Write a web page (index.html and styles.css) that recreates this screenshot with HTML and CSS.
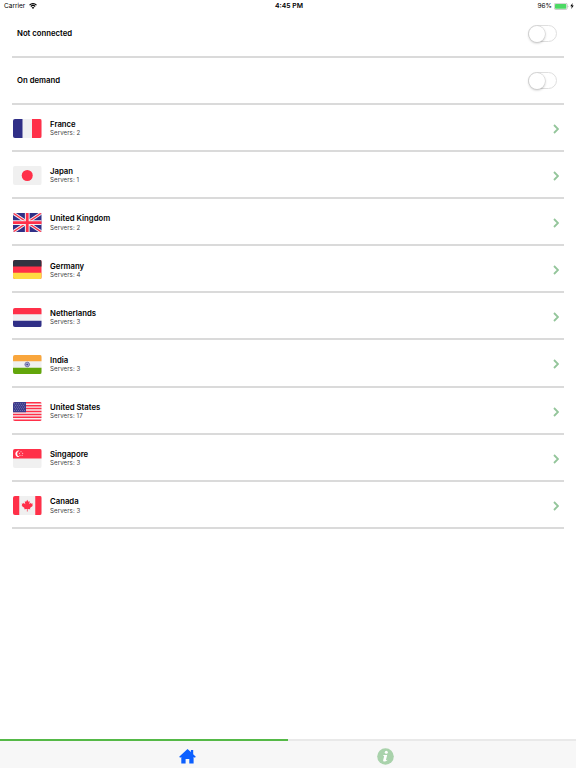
FILE: index.html
```html
<!DOCTYPE html>
<html lang="en">
<head>
<meta charset="utf-8">
<title>Servers</title>
<link rel="stylesheet" href="styles.css">
</head>
<body>
<header class="status">
  <div class="status-left"><span>Carrier</span>
    <svg class="wifi" viewBox="0 0 16 12"><path d="M1 4.2a10 10 0 0 1 14 0M3.6 7a6.3 6.3 0 0 1 8.8 0" fill="none" stroke="#000" stroke-width="2.2"/><path d="M8 12 5.3 9.2a3.8 3.8 0 0 1 5.4 0z"/></svg>
  </div>
  <div class="time">4:45 PM</div>
  <div class="status-right"><span>96%</span>
    <svg class="battery" viewBox="0 0 15 7"><rect x=".3" y=".3" width="12.9" height="6.2" rx="1.4" fill="#fff" stroke="#999" stroke-width=".5"/><rect x="1" y="1" width="11.3" height="4.8" rx=".7" fill="#4cd964"/><path d="M13.8 2.4q1 1 0 2z" fill="#777"/></svg>
    <svg class="bolt" viewBox="0 0 4 7"><path d="M2.7 0 0 3.9h1.7L1.2 7 4 2.9H2.3z"/></svg>
  </div>
</header>
<main class="list">
  <div class="row setting"><span class="name">Not connected</span><span class="switch"><span class="knob"></span></span></div>
  <div class="row setting"><span class="name">On demand</span><span class="switch"><span class="knob"></span></span></div>

  <div class="row">
    <svg class="flag" viewBox="0 0 57 38"><path fill="#f0f0f2" d="M0 0h57v38H0z"/><path fill="#302f87" d="M0 0h19v38H0z"/><path fill="#ff3049" d="M38 0h19v38H38z"/></svg>
    <div class="info"><span class="name">France</span><span class="count">Servers: 2</span></div>
    <svg class="chevron" viewBox="0 0 6 10"><path d="m1 1 4 4-4 4"/></svg>
  </div>
  <div class="row">
    <svg class="flag" viewBox="0 0 57 38"><path fill="#f0f0f0" d="M0 0h57v38H0z"/><circle cx="28.5" cy="19" r="11" fill="#ff3049"/></svg>
    <div class="info"><span class="name">Japan</span><span class="count">Servers: 1</span></div>
    <svg class="chevron" viewBox="0 0 6 10"><path d="m1 1 4 4-4 4"/></svg>
  </div>
  <div class="row">
    <svg class="flag" viewBox="0 0 57 38"><path fill="#302f87" d="M0 0h57v38H0z"/><path d="m0 0 57 38M57 0 0 38" stroke="#f0f0f2" stroke-width="6.5"/><path d="m0 0 57 38M57 0 0 38" stroke="#ff3049" stroke-width="2.8"/><path d="M28.5 0v38M0 19h57" stroke="#f0f0f2" stroke-width="9.5"/><path d="M28.5 0v38M0 19h57" stroke="#ff3049" stroke-width="5.5"/></svg>
    <div class="info"><span class="name">United Kingdom</span><span class="count">Servers: 2</span></div>
    <svg class="chevron" viewBox="0 0 6 10"><path d="m1 1 4 4-4 4"/></svg>
  </div>
  <div class="row">
    <svg class="flag" viewBox="0 0 57 38"><path fill="#ff3049" d="M0 0h57v38H0z"/><path fill="#303341" d="M0 0h57v13H0z"/><path fill="#ffdb43" d="M0 25.5h57V38H0z"/></svg>
    <div class="info"><span class="name">Germany</span><span class="count">Servers: 4</span></div>
    <svg class="chevron" viewBox="0 0 6 10"><path d="m1 1 4 4-4 4"/></svg>
  </div>
  <div class="row">
    <svg class="flag" viewBox="0 0 57 38"><path fill="#f0f0f2" d="M0 0h57v38H0z"/><path fill="#ff3049" d="M0 0h57v12.7H0z"/><path fill="#302f87" d="M0 25.3h57V38H0z"/></svg>
    <div class="info"><span class="name">Netherlands</span><span class="count">Servers: 3</span></div>
    <svg class="chevron" viewBox="0 0 6 10"><path d="m1 1 4 4-4 4"/></svg>
  </div>
  <div class="row">
    <svg class="flag" viewBox="0 0 57 38"><path fill="#f0f0f0" d="M0 0h57v38H0z"/><path fill="#f9a63c" d="M0 0h57v12.7H0z"/><path fill="#63a60b" d="M0 25.3h57V38H0z"/><circle cx="28.5" cy="19" r="4.7" fill="#ddddeb" stroke="#44438f" stroke-width="1.3"/><path d="M24 19h9M28.5 14.5v9M25.5 16l6 6M31.5 16l-6 6" stroke="#44438f" stroke-width=".8"/><circle cx="28.5" cy="19" r="1.5" fill="#44438f"/></svg>
    <div class="info"><span class="name">India</span><span class="count">Servers: 3</span></div>
    <svg class="chevron" viewBox="0 0 6 10"><path d="m1 1 4 4-4 4"/></svg>
  </div>
  <div class="row">
    <svg class="flag" viewBox="0 0 57 38"><path fill="#f4eff1" d="M0 0h57v38H0z"/><path d="M0 1.46h57M0 7.31h57M0 13.15h57M0 19h57M0 24.85h57M0 30.69h57M0 36.54h57" stroke="#ff3049" stroke-width="2.92"/><path fill="#3c3b8c" d="M0 0h26v20.46H0z"/><path d="M2.5 3.5h22M4.5 6.8h18M2.5 10.2h22M4.5 13.6h18M2.5 17h22" stroke="#b4b4d4" stroke-width="1.3" stroke-dasharray="1.4 2.6"/></svg>
    <div class="info"><span class="name">United States</span><span class="count">Servers: 17</span></div>
    <svg class="chevron" viewBox="0 0 6 10"><path d="m1 1 4 4-4 4"/></svg>
  </div>
  <div class="row">
    <svg class="flag" viewBox="0 0 57 38"><path fill="#f0f0f0" d="M0 0h57v38H0z"/><path fill="#ff3049" d="M0 0h57v19H0z"/><path d="M13 3.5a6.4 6.4 0 1 0 0 12.2 6.3 6.3 0 0 1 0-12.2z" fill="#fff"/><g fill="#fff"><circle cx="16" cy="5.5" r="1"/><circle cx="12.8" cy="8.3" r="1"/><circle cx="19.4" cy="8.3" r="1"/><circle cx="14" cy="12.3" r="1"/><circle cx="18.2" cy="12.3" r="1"/></g></svg>
    <div class="info"><span class="name">Singapore</span><span class="count">Servers: 3</span></div>
    <svg class="chevron" viewBox="0 0 6 10"><path d="m1 1 4 4-4 4"/></svg>
  </div>
  <div class="row">
    <svg class="flag" viewBox="0 0 57 38"><path fill="#f0f0f0" d="M0 0h57v38H0z"/><path fill="#ff3049" d="M0 0h12.5v38H0zM44.5 0H57v38H44.5zM28.5 7.5l2.3 4.2 2.7-1.2-1 6 3.3-3 .8 1.9 3.1-.5-1.2 3.5 1.3 1.1-5.8 4.7.6 2.3-5.4-.7v5.2h-1.4v-5.2l-5.4.7.6-2.3-5.8-4.7 1.3-1.1-1.2-3.5 3.1.5.8-1.9 3.3 3-1-6 2.7 1.2z"/></svg>
    <div class="info"><span class="name">Canada</span><span class="count">Servers: 3</span></div>
    <svg class="chevron" viewBox="0 0 6 10"><path d="m1 1 4 4-4 4"/></svg>
  </div>
</main>
<nav class="tabs">
  <a class="tab home active"><svg viewBox="0 0 17 15"><path fill="#0b5fff" d="M8.5 0 .2 7.7l.9 1L2.3 8v6.5h4.3V10h3.7v4.5h4.3V8l1.3.7.9-1-2.6-2.4V.9h-2.3v2.2z"/></svg></a>
  <a class="tab about"><svg viewBox="0 0 17 17"><circle cx="8.5" cy="8.5" r="8.3" fill="#a9d2ab"/><circle cx="9.3" cy="4.3" r="1.5" fill="#fff"/><path fill="#fff" d="M6.3 7h3.9L9 11.7c-.1.6.3.6 1.4 0l-.3.9c-2 1.5-4.4 1.3-3.9-.7l.9-3.5c.1-.5-.3-.6-1.1-.6z"/></svg></a>
</nav>
</body>
</html>
```
FILE: styles.css
```css
* { box-sizing: border-box; }
body {
  margin: 0;
  height: 768px;
  display: flex;
  flex-direction: column;
  background: #fff;
  color: #000;
  font-family: Inter, "Liberation Sans", sans-serif;
  overflow: hidden;
}
svg { display: block; flex: none; }
.status {
  height: 10.4px;
  padding: 2px 2px 0 4px;
  display: grid;
  grid-template-columns: 1fr auto 1fr;
  font-size: 6.5px;
  line-height: 8px;
}
.status-left, .status-right { display: flex; align-items: center; }
.status-left { gap: 3.5px; }
.status-right { justify-content: flex-end; gap: 1.5px; }
.time { font-weight: 600; font-size: 6.8px; }
.wifi { width: 8px; height: 6px; }
.battery { width: 15px; height: 7px; }
.bolt { width: 4px; height: 6px; }
.list { flex: 1; padding: 0 12px; }
.row {
  height: 47.17px;
  padding: 0 5.5px 0 1px;
  border-bottom: 2px solid #dadada;
  display: flex;
  align-items: center;
}
.setting { padding: 0 7px 0 5px; justify-content: space-between; }
.setting .name { margin-top: 1px; }
.flag { width: 28.5px; height: 19px; border-radius: 2px; margin-top: 2.4px; }
.info { flex: 1; margin: 2.8px 0 0 8.5px; display: flex; flex-direction: column; }
.name { font-size: 7.75px; line-height: 9.2px; font-weight: 600; }
.count { font-size: 6.1px; line-height: 8px; color: #444; letter-spacing: .1px; }
.chevron { width: 6px; height: 10px; margin-top: 2.6px; }
.chevron path { fill: none; stroke: #93c59a; stroke-width: 1.8; }
.switch {
  width: 29px;
  height: 17.5px;
  border: 1px solid #dfdfdf;
  border-radius: 9px;
  margin-top: 1px;
}
.knob {
  display: block;
  width: 16px;
  height: 16px;
  border-radius: 50%;
  background: #fff;
  box-shadow: 0 0 0 .5px #d0d0d0, 0 1px 2.5px rgba(0, 0, 0, .3);
}
.tabs { height: 28.6px; display: grid; grid-template-columns: 1fr 1fr; background: #f7f7f7; }
.tab { min-width: 0; border-top: 2px solid #e9e9e9; }
.active { border-top-color: #55b947; }
.home { padding: 8px 0 0 178.5px; }
.home svg { width: 17px; height: 15px; }
.about { padding: 7px 0 0 88.5px; }
.about svg { width: 17px; height: 17px; }
```
